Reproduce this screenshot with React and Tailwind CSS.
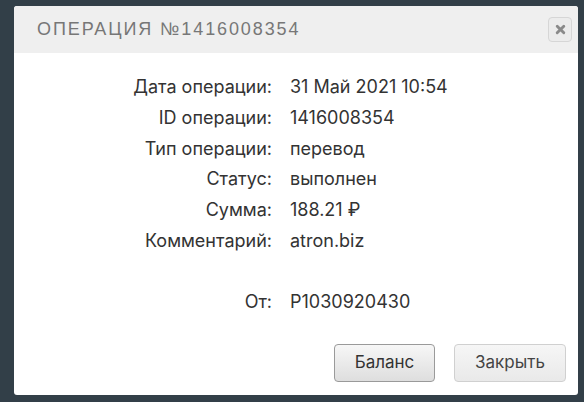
export default function App() {
  const rows = [
    ['Дата операции:', '31 Май 2021 10:54'],
    ['ID операции:', '1416008354'],
    ['Тип операции:', 'перевод'],
    ['Статус:', 'выполнен'],
    ['Сумма:', '188.21 ₽'],
    ['Комментарий:', 'atron.biz'],
  ]

  return (
    <div className="w-[584px] h-[402px] bg-[#323f48] pl-[14px] pr-[6px] pt-[6px] pb-[7px]" style={{ fontFamily: 'Inter, "Liberation Sans", sans-serif' }}>
      <div className="h-full bg-white rounded-[3px] flex flex-col overflow-hidden">
        {/* Header */}
        <div className="h-[47px] bg-[#efefef] flex items-center justify-between pl-[23px] pr-[6px]">
          <h1 className="text-[18px] tracking-[1.9px] text-[#777] font-normal" style={{ fontFamily: '"Liberation Sans", sans-serif' }}>
            ОПЕРАЦИЯ №1416008354
          </h1>
          <button className="w-[24px] h-[25px] rounded-[4px] border border-[#d6d6d6] bg-[#ececec] flex items-center justify-center">
            <svg width="11" height="11" viewBox="0 0 10 10">
              <path d="M2 2L8 8M8 2L2 8" stroke="#8a8a8a" strokeWidth="2.6" strokeLinecap="round" />
            </svg>
          </button>
        </div>

        {/* Body */}
        <div className="flex-1 pt-[22px]">
          <div className="grid grid-cols-[258px_1fr] gap-x-[18px] gap-y-[6px] text-[18px] leading-[24.8px] text-[#333]">
            {rows.map(([label, value]) => (
              <div key={label} className="contents">
                <div className="text-right">{label}</div>
                <div>{value}</div>
              </div>
            ))}
            <div className="text-right mt-[30px]">От:</div>
            <div className="mt-[30px]">P1030920430</div>
          </div>
        </div>

        {/* Footer */}
        <div className="flex justify-end gap-[19px] pr-[12px] pb-[13px]">
          <button className="w-[101px] h-[38px] rounded-[4px] border border-[#9a9a9a] bg-gradient-to-b from-[#f7f7f7] to-[#dedede] text-[17px] text-[#333]">
            Баланс
          </button>
          <button className="w-[112px] h-[38px] rounded-[4px] border border-[#d0d0d0] bg-gradient-to-b from-[#f6f6f6] to-[#e9e9e9] text-[17px] text-[#444]">
            Закрыть
          </button>
        </div>
      </div>
    </div>
  )
}
